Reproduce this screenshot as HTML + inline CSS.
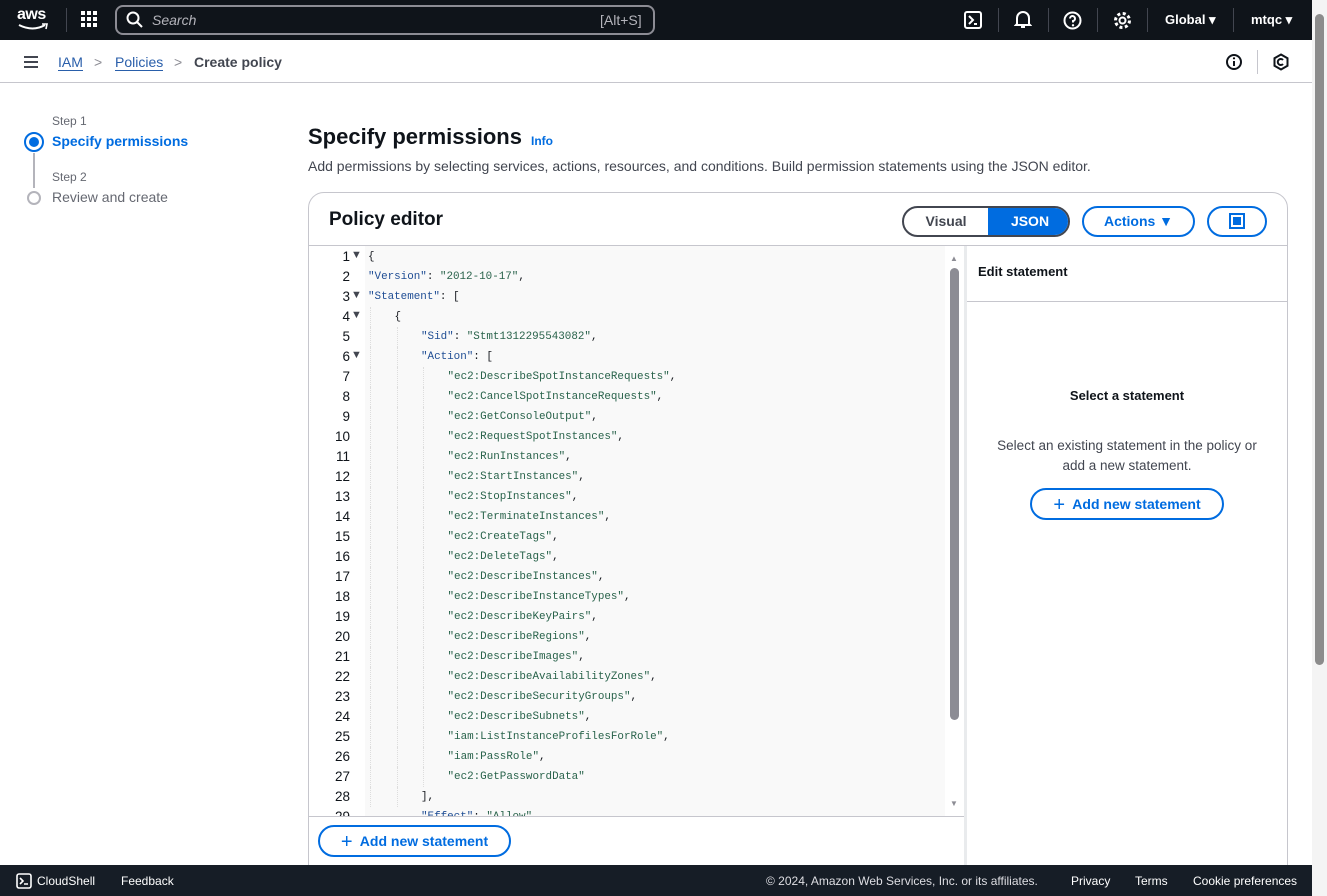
<!DOCTYPE html>
<html><head><meta charset="utf-8"><style>
*{box-sizing:border-box;margin:0;padding:0}
html,body{width:1327px;height:896px;overflow:hidden}
body{background:#fff;font-family:"Liberation Sans",sans-serif;color:#0f141a;position:relative}
.a{position:absolute}
.nav{left:0;top:0;width:1312px;height:40px;background:#0f141a}
.sep{width:1px;height:24px;background:#424650;top:8px}
.ic{color:#fff}
.crumb{top:54px;font-size:14px}
.code{font-family:"Liberation Mono",monospace;font-size:10.9px;color:#16191f;white-space:pre}
.ln{font-size:13.5px;color:#0f141a;text-align:right;width:40px;left:310px}
.btn{border:2px solid #006ce0;border-radius:20px;color:#006ce0;font-weight:bold;font-size:14px;text-align:center}
.k{color:#1f4d94}.s{color:#28624a}
.guide{border-left:1px dotted #ddd;width:0;height:20px}
</style></head><body>
<div class="a nav"></div>
<div class="a" style="left:17px;top:6px;color:#fff;font-size:16px;font-weight:bold;letter-spacing:-0.5px">aws</div>
<svg class="a" style="left:17px;top:22px" width="32" height="10"><path d="M2 3 Q16 10 28 3" stroke="#fff" stroke-width="2" fill="none"/><path d="M25 2 L30 2 L29 7" stroke="#fff" stroke-width="1.6" fill="none"/></svg>
<div class="a sep" style="left:66px"></div>
<svg class="a" style="left:81px;top:11px" width="18" height="18" fill="#fff"><rect x="0" y="0" width="4" height="4"/><rect x="6" y="0" width="4" height="4"/><rect x="12" y="0" width="4" height="4"/><rect x="0" y="6" width="4" height="4"/><rect x="6" y="6" width="4" height="4"/><rect x="12" y="6" width="4" height="4"/><rect x="0" y="12" width="4" height="4"/><rect x="6" y="12" width="4" height="4"/><rect x="12" y="12" width="4" height="4"/></svg>
<div class="a" style="left:115px;top:5px;width:540px;height:30px;border:2px solid #8c8c94;border-radius:8px;background:#0f141a"></div>
<svg class="a" style="left:126px;top:11px" width="18" height="18"><circle cx="7" cy="7" r="5.5" stroke="#fff" stroke-width="2" fill="none"/><path d="M11 11 L16 16" stroke="#fff" stroke-width="2"/></svg>
<div class="a" style="left:152px;top:12px;color:#b4b4bb;font-size:14px;font-style:italic">Search</div>
<div class="a" style="left:600px;top:12px;color:#b4b4bb;font-size:14px">[Alt+S]</div>
<svg class="a" style="left:964px;top:11px" width="18" height="18"><rect x="1" y="1" width="16" height="16" rx="2" stroke="#fff" stroke-width="2" fill="none"/><path d="M5 5 L9 9 L5 13 M10 13 H13" stroke="#fff" stroke-width="2" fill="none"/></svg>
<div class="a sep" style="left:998px"></div>
<svg class="a" style="left:1014px;top:10px" width="18" height="20"><path d="M3 14 V8 A6 6 0 0 1 15 8 V14 L16 15 H2 Z M7 17 H11" stroke="#fff" stroke-width="2" fill="none"/></svg>
<div class="a sep" style="left:1048px"></div>
<svg class="a" style="left:1063px;top:11px" width="19" height="19"><circle cx="9.5" cy="9.5" r="8" stroke="#fff" stroke-width="2" fill="none"/><path d="M7 7.5 A2.5 2.5 0 1 1 10 10 V11.5" stroke="#fff" stroke-width="2" fill="none"/><circle cx="10" cy="14.3" r="1.2" fill="#fff"/></svg>
<div class="a sep" style="left:1097px"></div>
<svg class="a" style="left:1113px;top:11px" width="19" height="19"><circle cx="9.5" cy="9.5" r="3" stroke="#fff" stroke-width="2" fill="none"/><circle cx="9.5" cy="9.5" r="7" stroke="#fff" stroke-width="3" stroke-dasharray="3 2.5" fill="none"/></svg>
<div class="a sep" style="left:1147px"></div>
<div class="a ic" style="left:1165px;top:12px;font-size:13px;font-weight:bold">Global ▾</div>
<div class="a sep" style="left:1233px"></div>
<div class="a ic" style="left:1251px;top:12px;font-size:13px;font-weight:bold">mtqc ▾</div>

<div class="a" style="left:24px;top:56px;width:14px;height:2px;background:#424650;box-shadow:0 5px 0 #424650,0 10px 0 #424650"></div>
<div class="a crumb" style="left:58px;color:#295eaa;border-bottom:1px solid #295eaa">IAM</div>
<div class="a crumb" style="left:94px;color:#8c8c94">&gt;</div>
<div class="a crumb" style="left:115px;color:#295eaa;border-bottom:1px solid #295eaa">Policies</div>
<div class="a crumb" style="left:174px;color:#8c8c94">&gt;</div>
<div class="a crumb" style="left:194px;color:#424650;font-weight:bold">Create policy</div>
<svg class="a" style="left:1225px;top:53px" width="18" height="18"><circle cx="9" cy="9" r="7" stroke="#0f141a" stroke-width="2" fill="none"/><path d="M9 8 V13" stroke="#0f141a" stroke-width="2"/><circle cx="9" cy="5.3" r="1.1"/></svg>
<div class="a" style="left:1257px;top:50px;width:1px;height:24px;background:#c6c6cd"></div>
<svg class="a" style="left:1272px;top:53px" width="18" height="18"><path d="M9 1.5 L15.5 5.2 V12.8 L9 16.5 L2.5 12.8 V5.2 Z" stroke="#0f141a" stroke-width="2" fill="none"/><path d="M11 7 A3 3 0 1 0 11 11" stroke="#0f141a" stroke-width="2" fill="none"/></svg>
<div class="a" style="left:0;top:82px;width:1312px;height:1px;background:#c6c6cd"></div>

<div class="a" style="left:52px;top:114px;font-size:12px;color:#656871">Step 1</div>
<div class="a" style="left:24px;top:132px;width:20px;height:20px;border:2px solid #006ce0;border-radius:50%"></div>
<div class="a" style="left:29px;top:137px;width:10px;height:10px;background:#006ce0;border-radius:50%"></div>
<div class="a" style="left:52px;top:133px;font-size:14px;font-weight:bold;color:#006ce0">Specify permissions</div>
<div class="a" style="left:33px;top:153px;width:2px;height:35px;background:#b4b4bb"></div>
<div class="a" style="left:52px;top:170px;font-size:12px;color:#656871">Step 2</div>
<div class="a" style="left:27px;top:191px;width:14px;height:14px;border:2px solid #b4b4bb;border-radius:50%"></div>
<div class="a" style="left:52px;top:189px;font-size:14px;color:#656871">Review and create</div>

<div class="a" style="left:308px;top:124px;font-size:22px;font-weight:bold">Specify permissions</div>
<div class="a" style="left:531px;top:134px;font-size:12px;font-weight:bold;color:#006ce0">Info</div>
<div class="a" style="left:308px;top:158px;font-size:14px;color:#424650">Add permissions by selecting services, actions, resources, and conditions. Build permission statements using the JSON editor.</div>

<div class="a" style="left:308px;top:192px;width:980px;height:690px;border:1px solid #c6c6cd;border-radius:16px"></div>
<div class="a" style="left:329px;top:209px;font-size:19px;font-weight:bold">Policy editor</div>
<div class="a" style="left:902px;top:206px;width:168px;height:31px;border:2px solid #424650;border-radius:16px;overflow:hidden">
<div class="a" style="left:0;top:0;width:84px;height:27px;text-align:center;font-size:14px;font-weight:bold;color:#424650;line-height:27px">Visual</div>
<div class="a" style="left:84px;top:0;width:84px;height:27px;background:#006ce0;text-align:center;font-size:14px;font-weight:bold;color:#fff;line-height:27px">JSON</div></div>
<div class="a btn" style="left:1082px;top:206px;width:113px;height:31px;line-height:27px">Actions ▼</div>
<div class="a btn" style="left:1207px;top:206px;width:60px;height:31px"></div>
<div class="a" style="left:1229px;top:213px;width:16px;height:16px;border:2px solid #006ce0"></div>
<div class="a" style="left:1233px;top:217px;width:8px;height:8px;background:#006ce0"></div>

<div class="a" style="left:309px;top:245px;width:978px;height:1px;background:#c6c6cd"></div>
<div class="a" style="left:365px;top:246px;width:580px;height:570px;background:#f9f9f9"></div>
<div class="a" style="left:309px;top:816px;width:656px;height:1px;background:#c6c6cd"></div>
<div class="a" style="left:964px;top:246px;width:3px;height:620px;background:#e9ebed"></div>
<div class="a" style="left:950px;top:268px;width:9px;height:452px;background:#8c8c94;border-radius:5px"></div>
<div class="a" style="left:950px;top:254px;font-size:8px;color:#8c8c94">▲</div>
<div class="a" style="left:950px;top:799px;font-size:8px;color:#8c8c94">▼</div>

<div id="code"></div>

<div class="a" style="left:978px;top:264px;font-size:13px;font-weight:bold">Edit statement</div>
<div class="a" style="left:967px;top:301px;width:320px;height:1px;background:#c6c6cd"></div>
<div class="a" style="left:967px;top:388px;width:320px;text-align:center;font-size:13px;font-weight:bold">Select a statement</div>
<div class="a" style="left:967px;top:436px;width:320px;text-align:center;font-size:13.5px;line-height:20px;color:#424650">Select an existing statement in the policy or<br>add a new statement.</div>
<div class="a btn" style="left:1030px;top:488px;width:194px;height:32px;line-height:28px"><span style="font-size:20px;font-weight:normal;vertical-align:-2px">+</span>&nbsp; Add new statement</div>
<div class="a btn" style="left:318px;top:825px;width:193px;height:32px;line-height:28px"><span style="font-size:20px;font-weight:normal;vertical-align:-2px">+</span>&nbsp; Add new statement</div>

<div class="a" style="left:0;top:865px;width:1312px;height:31px;background:#161d26"></div>
<svg class="a" style="left:16px;top:873px" width="16" height="16"><rect x="1" y="1" width="14" height="14" rx="2" stroke="#fff" stroke-width="1.6" fill="none"/><path d="M4 5 L7 8 L4 11 M8 11 H12" stroke="#fff" stroke-width="1.6" fill="none"/></svg>
<div class="a" style="left:37px;top:874px;color:#fff;font-size:12px">CloudShell</div>
<div class="a" style="left:121px;top:874px;color:#fff;font-size:12px">Feedback</div>
<div class="a" style="left:766px;top:874px;color:#dedee3;font-size:12px">© 2024, Amazon Web Services, Inc. or its affiliates.</div>
<div class="a" style="left:1071px;top:874px;color:#fff;font-size:12px">Privacy</div>
<div class="a" style="left:1135px;top:874px;color:#fff;font-size:12px">Terms</div>
<div class="a" style="left:1193px;top:874px;color:#fff;font-size:12px">Cookie preferences</div>

<div class="a" style="left:1312px;top:0;width:15px;height:896px;background:#f4f4f4"></div>
<div class="a" style="left:1315px;top:14px;width:9px;height:651px;background:#8c8c8c;border-radius:5px"></div>

<script>
var L=[[0,'{',1],[0,'<span class=k>"Version"</span>: <span class=s>"2012-10-17"</span>,',0],[0,'<span class=k>"Statement"</span>: [',1],[1,'{',1],[2,'<span class=k>"Sid"</span>: <span class=s>"Stmt1312295543082"</span>,',0],[2,'<span class=k>"Action"</span>: [',1]];
var acts=["ec2:DescribeSpotInstanceRequests","ec2:CancelSpotInstanceRequests","ec2:GetConsoleOutput","ec2:RequestSpotInstances","ec2:RunInstances","ec2:StartInstances","ec2:StopInstances","ec2:TerminateInstances","ec2:CreateTags","ec2:DeleteTags","ec2:DescribeInstances","ec2:DescribeInstanceTypes","ec2:DescribeKeyPairs","ec2:DescribeRegions","ec2:DescribeImages","ec2:DescribeAvailabilityZones","ec2:DescribeSecurityGroups","ec2:DescribeSubnets","iam:ListInstanceProfilesForRole","iam:PassRole","ec2:GetPasswordData"];
acts.forEach(function(a,i){L.push([3,'<span class=s>"'+a+'"</span>'+(i<acts.length-1?',':''),0]);});
L.push([2,'],',0]);
var h='';
L.forEach(function(l,i){var y=247+i*20;
h+='<div class="a ln" style="top:'+(y+2)+'px">'+(i+1)+'</div>';
if(l[2])h+='<div class="a" style="left:351px;top:'+(y+2)+'px;font-size:11px;color:#424650">▼</div>';
for(var g=1;g<=l[0];g++)h+='<div class="a guide" style="left:'+(368+(g-1)*26.5+2)+'px;top:'+y+'px"></div>';
h+='<div class="a code" style="left:'+(368+l[0]*26.5)+'px;top:'+(y+4)+'px">'+l[1]+'</div>';});
h+='<div class="a" style="left:309px;top:807px;width:640px;height:9px;overflow:hidden"><div class="a ln" style="left:1px;top:2px">29</div><div class="a code" style="left:112px;top:4px"><span class=k>"Effect"</span>: <span class=s>"Allow"</span></div></div>';
document.getElementById('code').innerHTML=h;
</script>
</body></html>
